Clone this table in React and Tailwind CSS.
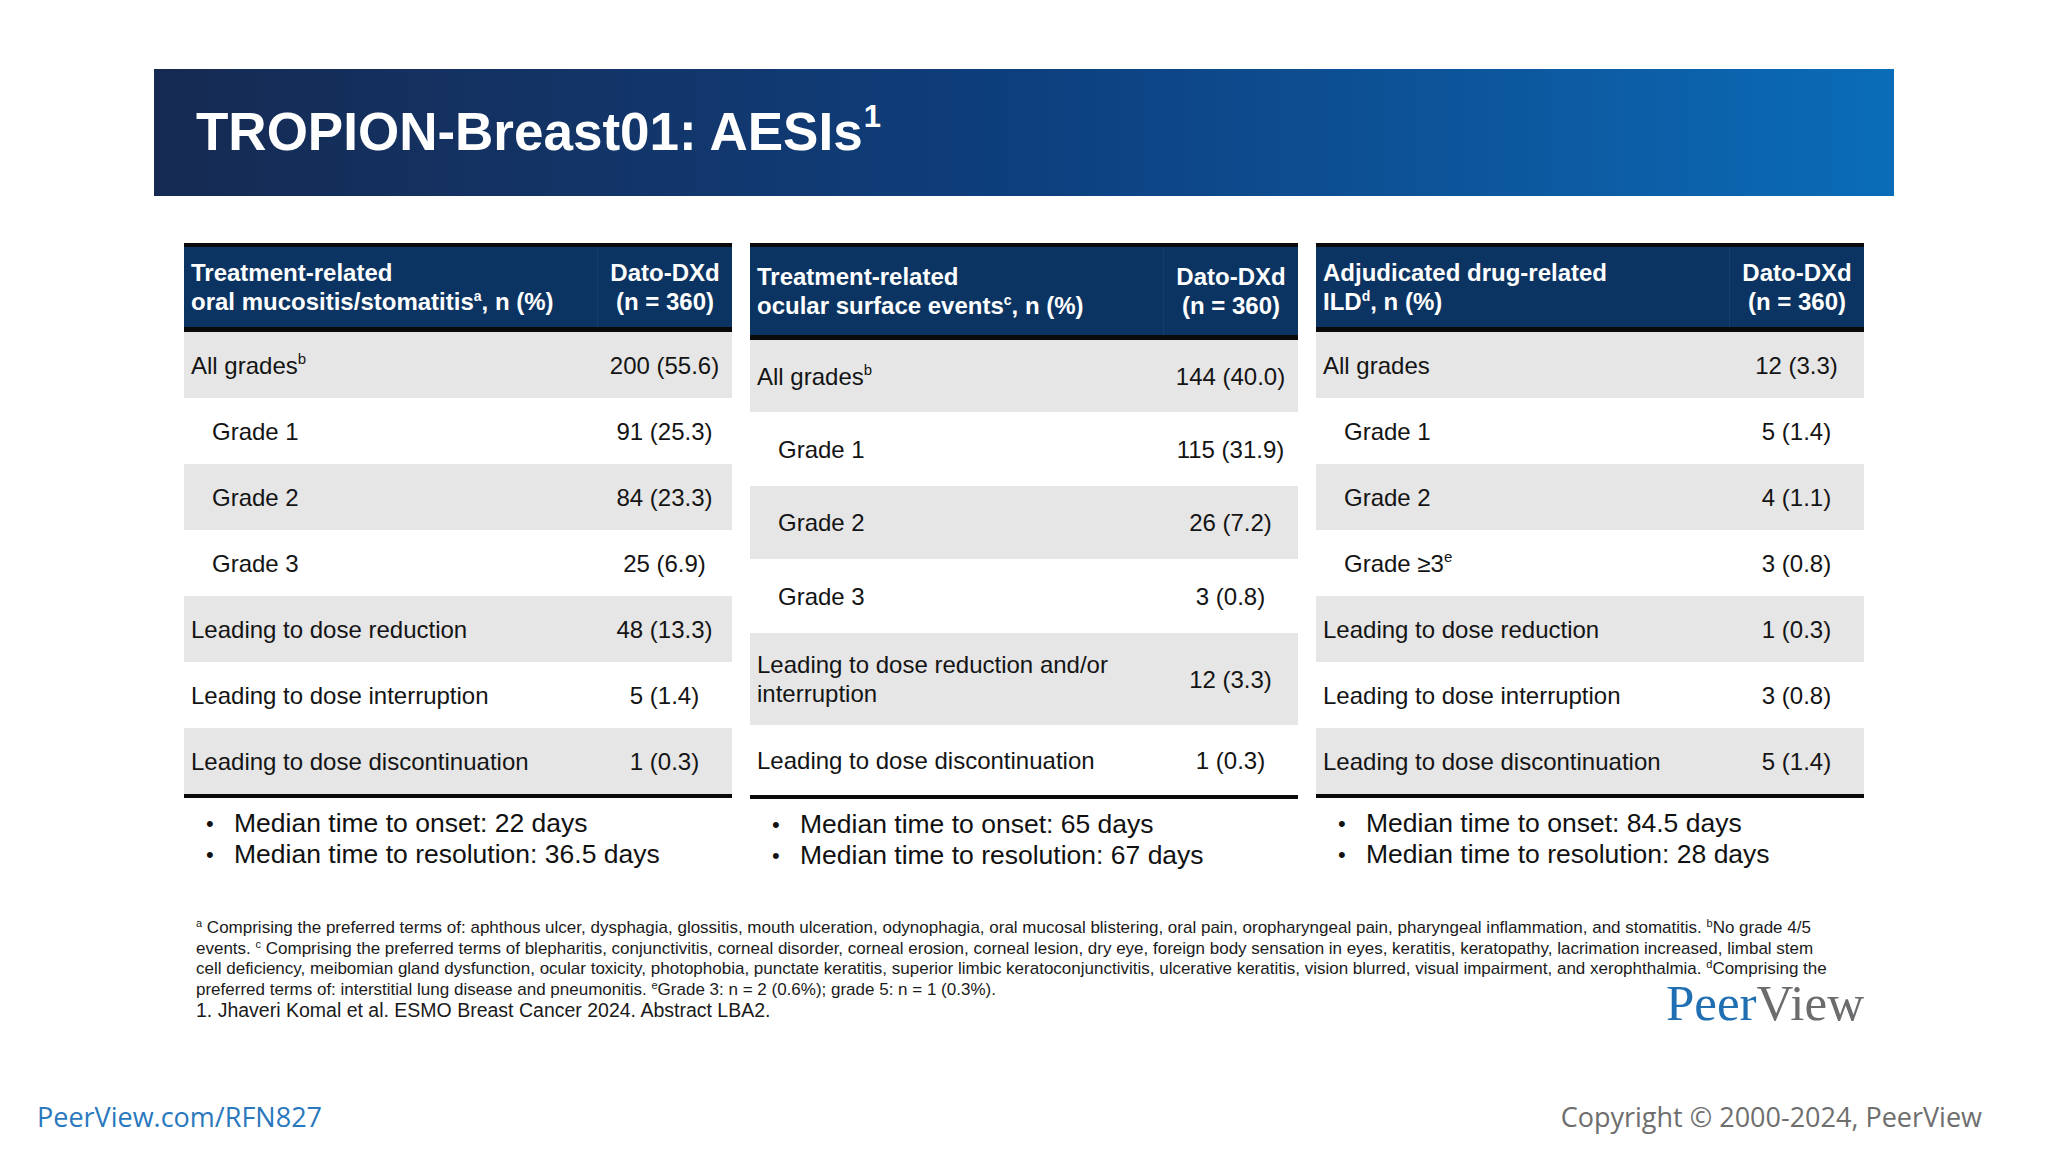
import React from "react";

const tables = [
  {
    head1: "Treatment-related",
    head2: (
      <>
        oral mucositis/stomatitis<sup className="text-[14px] -top-[9px] font-bold">a</sup>, n (%)
      </>
    ),
    headH: "h-[89px]",
    rows: [
      { label: "All grades", sup: "b", val: "200 (55.6)", gray: true, h: "h-[66px]" },
      { label: "Grade 1", val: "91 (25.3)", indent: true, h: "h-[66px]" },
      { label: "Grade 2", val: "84 (23.3)", indent: true, gray: true, h: "h-[66px]" },
      { label: "Grade 3", val: "25 (6.9)", indent: true, h: "h-[66px]" },
      { label: "Leading to dose reduction", val: "48 (13.3)", gray: true, h: "h-[66px]" },
      { label: "Leading to dose interruption", val: "5 (1.4)", h: "h-[66px]" },
      { label: "Leading to dose discontinuation", val: "1 (0.3)", gray: true, h: "h-[66px]" },
    ],
    bullets: ["Median time to onset: 22 days", "Median time to resolution: 36.5 days"],
  },
  {
    head1: "Treatment-related",
    head2: (
      <>
        ocular surface events<sup className="text-[14px] -top-[9px] font-bold">c</sup>, n (%)
      </>
    ),
    headH: "h-[97px]",
    rows: [
      { label: "All grades", sup: "b", val: "144 (40.0)", gray: true, h: "h-[72px]" },
      { label: "Grade 1", val: "115 (31.9)", indent: true, h: "h-[74px]" },
      { label: "Grade 2", val: "26 (7.2)", indent: true, gray: true, h: "h-[73px]" },
      { label: "Grade 3", val: "3 (0.8)", indent: true, h: "h-[74px]" },
      {
        label: (
          <>
            Leading to dose reduction and/or
            <br />
            interruption
          </>
        ),
        val: "12 (3.3)",
        gray: true,
        h: "h-[92px]",
      },
      { label: "Leading to dose discontinuation", val: "1 (0.3)", h: "h-[70px]" },
    ],
    bullets: ["Median time to onset: 65 days", "Median time to resolution: 67 days"],
  },
  {
    head1: "Adjudicated drug-related",
    head2: (
      <>
        ILD<sup className="text-[14px] -top-[9px] font-bold">d</sup>, n (%)
      </>
    ),
    headH: "h-[89px]",
    rows: [
      { label: "All grades", val: "12 (3.3)", gray: true, h: "h-[66px]" },
      { label: "Grade 1", val: "5 (1.4)", indent: true, h: "h-[66px]" },
      { label: "Grade 2", val: "4 (1.1)", indent: true, gray: true, h: "h-[66px]" },
      { label: "Grade ≥3", sup: "e", val: "3 (0.8)", indent: true, h: "h-[66px]" },
      { label: "Leading to dose reduction", val: "1 (0.3)", gray: true, h: "h-[66px]" },
      { label: "Leading to dose interruption", val: "3 (0.8)", h: "h-[66px]" },
      { label: "Leading to dose discontinuation", val: "5 (1.4)", gray: true, h: "h-[66px]" },
    ],
    bullets: ["Median time to onset: 84.5 days", "Median time to resolution: 28 days"],
  },
];

function Column({ t }) {
  return (
    <div className="w-[548px] flex flex-col">
      <div
        className={`${t.headH} flex border-t-4 border-b-[5px] border-[#0a0a0a] bg-[#0c3462] text-white font-bold text-[24px] leading-[29px]`}
      >
        <div className="flex-1 pl-[7px] flex flex-col justify-center whitespace-nowrap">
          <div>{t.head1}</div>
          <div>{t.head2}</div>
        </div>
        <div className="w-[135px] border-l border-[#163d6c] flex flex-col justify-center items-center whitespace-nowrap">
          <div>Dato-DXd</div>
          <div>(n = 360)</div>
        </div>
      </div>
      <div className="flex flex-col border-b-4 border-[#0a0a0a] text-[24px] leading-[29px] text-[#141414]">
        {t.rows.map((r, i) => (
          <div
            key={i}
            className={`${r.h} flex items-center ${r.gray ? "bg-[#e6e6e6]" : "bg-white"}`}
          >
            <div className={`flex-1 ${r.indent ? "pl-[28px]" : "pl-[7px]"}`}>
              {r.label}
              {r.sup && <sup className="text-[15px] -top-[10px]">{r.sup}</sup>}
            </div>
            <div className="w-[135px] text-center whitespace-nowrap">{r.val}</div>
          </div>
        ))}
      </div>
      <div className="mt-[10px] pl-[22px] text-[26.5px] leading-[31px] text-[#111]">
        {t.bullets.map((b, i) => (
          <div key={i} className="flex whitespace-nowrap">
            <span className="w-[28px] text-[22px]">•</span>
            <span>{b}</span>
          </div>
        ))}
      </div>
    </div>
  );
}

function S({ children }) {
  return <sup className="text-[11px] -top-[6px]">{children}</sup>;
}

export default function App() {
  return (
    <div className="w-[2048px] h-[1152px] bg-white overflow-hidden flex flex-col font-['Liberation_Sans',Arial,sans-serif] text-[#111]">
      <div className="ml-[154px] mt-[69px] w-[1740px] h-[127px] shrink-0 flex items-center pl-[42px] bg-linear-to-r from-[#152a52] via-[#0d3f7e] to-[#0a6cb8]">
        <h1 className="text-white font-bold text-[53px] leading-none -mt-[3px]">
          TROPION-Breast01: AESIs<sup className="text-[31px] -top-[23px] ml-[1px]">1</sup>
        </h1>
      </div>

      <div className="ml-[184px] mt-[47px] flex gap-[18px] items-start">
        {tables.map((t, i) => (
          <Column key={i} t={t} />
        ))}
      </div>

      <div className="ml-[196px] mt-[47px] w-[1668px] text-[17px] leading-[20.5px] text-[#1a1a1a] whitespace-nowrap">
        <div>
          <S>a</S> Comprising the preferred terms of: aphthous ulcer, dysphagia, glossitis, mouth ulceration, odynophagia, oral mucosal blistering, oral pain, oropharyngeal pain, pharyngeal inflammation, and stomatitis. <S>b</S>No grade 4/5
        </div>
        <div>
          events. <S>c</S> Comprising the preferred terms of blepharitis, conjunctivitis, corneal disorder, corneal erosion, corneal lesion, dry eye, foreign body sensation in eyes, keratitis, keratopathy, lacrimation increased, limbal stem
        </div>
        <div>
          cell deficiency, meibomian gland dysfunction, ocular toxicity, photophobia, punctate keratitis, superior limbic keratoconjunctivitis, ulcerative keratitis, vision blurred, visual impairment, and xerophthalmia. <S>d</S>Comprising the
        </div>
        <div className="flex justify-between items-start">
          <div>
            <div>
              preferred terms of: interstitial lung disease and pneumonitis. <S>e</S>Grade 3: n = 2 (0.6%); grade 5: n = 1 (0.3%).
            </div>
            <div className="text-[19.5px] leading-[21.5px]">1. Jhaveri Komal et al. ESMO Breast Cancer 2024. Abstract LBA2.</div>
          </div>
          <div className="font-['Liberation_Serif',serif] text-[51px] leading-[46px]">
            <span className="text-[#1f6fb2]">Peer</span>
            <span className="text-[#6b6c6e]">View</span>
          </div>
        </div>
      </div>

      <div className="mt-auto pb-[17px] pl-[37px] pr-[66px] flex justify-between items-center font-['Open_Sans',sans-serif] text-[27px] leading-[36px]">
        <span className="text-[#2a78bd]">PeerView.com/RFN827</span>
        <span className="text-[#6e6e6e]">Copyright © 2000-2024, PeerView</span>
      </div>
    </div>
  );
}
